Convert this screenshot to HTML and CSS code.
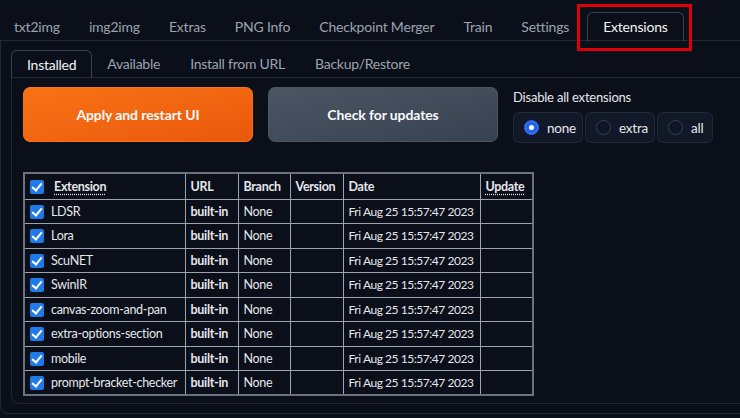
FILE: index.html
```html
<!DOCTYPE html>
<html>
<head>
<meta charset="utf-8">
<link rel="stylesheet" href="styles.css">
</head>
<body>
<div class="tabs">
  <div class="tabbar">
    <span class="tab">txt2img</span>
    <span class="tab">img2img</span>
    <span class="tab">Extras</span>
    <span class="tab">PNG Info</span>
    <span class="tab">Checkpoint Merger</span>
    <span class="tab">Train</span>
    <span class="tab">Settings</span>
    <span class="tab active">Extensions<span class="highlight"></span></span>
  </div>
  <div class="panel">
    <div class="subtabbar">
      <span class="subtab active">Installed</span>
      <span class="subtab">Available</span>
      <span class="subtab">Install from URL</span>
      <span class="subtab">Backup/Restore</span>
    </div>
    <div class="subpanel">
      <div class="controls">
        <button class="btn primary">Apply and restart UI</button>
        <button class="btn secondary">Check for updates</button>
        <div class="radio-block">
          <div class="radio-label">Disable all extensions</div>
          <div class="radio-group">
            <label class="radio-item"><span class="dot checked"></span>none</label>
            <label class="radio-item"><span class="dot"></span>extra</label>
            <label class="radio-item"><span class="dot"></span>all</label>
          </div>
        </div>
      </div>
      <table class="ext-table">
        <colgroup>
          <col class="c-name"><col class="c-url"><col class="c-branch"><col class="c-ver"><col class="c-date"><col class="c-upd">
        </colgroup>
        <thead>
          <tr>
            <th><span class="cb"></span><abbr>Extension</abbr></th>
            <th>URL</th>
            <th>Branch</th>
            <th>Version</th>
            <th>Date</th>
            <th><abbr>Update</abbr></th>
          </tr>
        </thead>
        <tbody>
          <tr><td><span class="cb"></span>LDSR</td><td class="b">built-in</td><td>None</td><td></td><td class="d">Fri Aug 25 15:57:47 2023</td><td></td></tr>
          <tr><td><span class="cb"></span>Lora</td><td class="b">built-in</td><td>None</td><td></td><td class="d">Fri Aug 25 15:57:47 2023</td><td></td></tr>
          <tr><td><span class="cb"></span>ScuNET</td><td class="b">built-in</td><td>None</td><td></td><td class="d">Fri Aug 25 15:57:47 2023</td><td></td></tr>
          <tr><td><span class="cb"></span>SwinIR</td><td class="b">built-in</td><td>None</td><td></td><td class="d">Fri Aug 25 15:57:47 2023</td><td></td></tr>
          <tr><td><span class="cb"></span>canvas-zoom-and-pan</td><td class="b">built-in</td><td>None</td><td></td><td class="d">Fri Aug 25 15:57:47 2023</td><td></td></tr>
          <tr><td><span class="cb"></span>extra-options-section</td><td class="b">built-in</td><td>None</td><td></td><td class="d">Fri Aug 25 15:57:47 2023</td><td></td></tr>
          <tr><td><span class="cb"></span>mobile</td><td class="b">built-in</td><td>None</td><td></td><td class="d">Fri Aug 25 15:57:47 2023</td><td></td></tr>
          <tr><td><span class="cb"></span>prompt-bracket-checker</td><td class="b">built-in</td><td>None</td><td></td><td class="d">Fri Aug 25 15:57:47 2023</td><td></td></tr>
        </tbody>
      </table>
    </div>
  </div>
</div>
</body>
</html>
```
FILE: styles.css
```css
* { box-sizing: border-box; }
html, body {
  margin: 0;
  background: #0b0f19;
  color: #e5e7eb;
  font-family: "Lato", "Noto Sans", sans-serif;
  overflow: hidden;
}
.tabs { padding-top: 12px; }
.tabbar {
  display: flex;
  height: 29px;
  border-bottom: 1px solid #1f2937;
}
.tab {
  position: relative;
  padding: 0 14px;
  font-size: 14px;
  letter-spacing: -0.2px;
  line-height: 29px;
  color: #9ca3af;
  margin-right: 1px;
}
.tab.active {
  color: #f3f4f6;
  border: 1px solid #374151;
  border-bottom: 1px solid #0b0f19;
  border-radius: 6px 6px 0 0;
  height: 30px;
  line-height: 27px;
  padding: 0 15px;
  margin-left: 3px;
}
.highlight {
  position: absolute;
  left: -11px;
  right: -9px;
  top: -9px;
  bottom: -10px;
  border: 3px solid #e0000b;
}
.panel {
  border: 1px solid #1f2937;
  border-top: none;
  border-radius: 0 0 8px 8px;
  padding: 9px 10px 8px 10px;
  margin-right: -20px;
  height: 373px;
}
.subtabbar {
  display: flex;
  height: 28px;
  border-bottom: 1px solid #1f2937;
}
.subtab {
  padding: 0 15px;
  font-size: 14px;
  letter-spacing: -0.25px;
  line-height: 28px;
  color: #9ca3af;
}
.subtab.active {
  color: #f3f4f6;
  border: 1px solid #374151;
  border-bottom: 1px solid #0b0f19;
  border-radius: 6px 6px 0 0;
  height: 29px;
  line-height: 27px;
}
.subpanel {
  border: 1px solid #1f2937;
  border-top: none;
  border-radius: 0 0 8px 8px;
  padding: 9px 11px 9px 11px;
  height: 326px;
}
.controls {
  display: flex;
  align-items: flex-start;
  gap: 15px;
}
.btn {
  width: 230px;
  height: 55px;
  border-radius: 7px;
  border: 1px solid transparent;
  font-family: inherit;
  font-size: 14px;
  letter-spacing: -0.1px;
  font-weight: 700;
  color: #f9fafb;
}
.btn.primary {
  background: linear-gradient(to bottom right, #f97316, #ea580c);
  border-color: #f97316;
}
.btn.secondary {
  background: linear-gradient(to bottom right, #4b5563, #374151);
  border-color: #4b5563;
}
.radio-block { padding-top: 2px; }
.radio-label {
  font-size: 13px;
  letter-spacing: -0.2px;
  color: #e5e7eb;
  line-height: 17px;
  margin-bottom: 6px;
}
.radio-group { display: flex; gap: 2px; }
.radio-item {
  display: flex;
  align-items: center;
  height: 31px;
  padding: 0 10px;
  background: #111827;
  border: 1px solid #1f2937;
  border-radius: 6px;
  font-size: 13.5px;
  letter-spacing: -0.2px;
  color: #e5e7eb;
  gap: 8px;
}
.radio-item:nth-child(1) { width: 70px; }
.radio-item:nth-child(2) { width: 70px; }
.radio-item:nth-child(3) { width: 56px; }
.dot {
  width: 15px;
  height: 15px;
  border-radius: 50%;
  border: 1px solid #374151;
  background: #0f1523;
  flex: none;
}
.dot.checked {
  background: #2563eb;
  border-color: #2563eb;
  box-shadow: inset 0 0 0 4px #2563eb, inset 0 0 0 8px #fff;
}
.ext-table {
  margin-top: 29px;
  width: 509px;
  table-layout: fixed;
  border-collapse: collapse;
  border: 2px solid #6b7280;
  font-size: 12.5px;
  letter-spacing: -0.3px;
  color: #e5e7eb;
}
.ext-table th, .ext-table td {
  border: 1px solid #9ca3af;
  height: 24.5px;
  padding: 0 5px;
  text-align: left;
  white-space: nowrap;
  overflow: hidden;
}
.ext-table td.d {
  font-size: 12px;
  letter-spacing: -0.45px;
}
.ext-table th { font-weight: 700; height: 26px; }
.c-name { width: 161px; }
.c-url { width: 53px; }
.c-branch { width: 52px; }
.c-ver { width: 53px; }
.c-date { width: 137px; }
.c-upd { width: 53px; }
abbr {
  text-decoration: underline dotted;
  text-underline-offset: 3px;
}
.b { font-weight: 700; }
.cb {
  display: inline-block;
  width: 14px;
  height: 14px;
  border-radius: 2px;
  background: #1f7ae8;
  vertical-align: -3px;
  margin-right: 7px;
  position: relative;
}
.cb::after {
  content: "";
  position: absolute;
  left: 4px;
  top: 1px;
  width: 4px;
  height: 8px;
  border: solid #fff;
  border-width: 0 2px 2px 0;
  transform: rotate(40deg);
}
th .cb { margin-right: 10px; }
```
